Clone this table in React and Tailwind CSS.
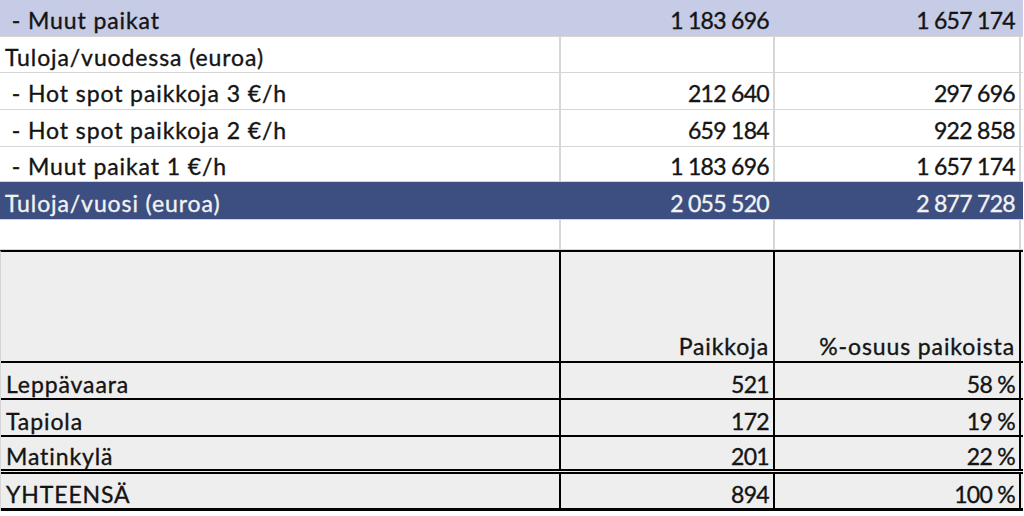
import React from "react";

const upper = [
  { label: " - Muut paikat", b: "1 183 696", c: "1 657 174", kind: "light", h: "h-[37px]" },
  { label: "Tuloja/vuodessa (euroa)", b: "", c: "", h: "h-[36px]" },
  { label: " - Hot spot paikkoja 3 €/h", b: "212 640", c: "297 696", h: "h-[37px]" },
  { label: " - Hot spot paikkoja 2 €/h", b: "659 184", c: "922 858", h: "h-[37px]" },
  { label: " - Muut paikat 1 €/h", b: "1 183 696", c: "1 657 174", h: "h-[35px]" },
  { label: "Tuloja/vuosi (euroa)", b: "2 055 520", c: "2 877 728", kind: "dark", h: "h-[38px]" },
  { label: "", b: "", c: "", h: "h-[30px]" },
];

const lower = [
  { label: "Leppävaara", b: "521", c: "58 %" },
  { label: "Tapiola", b: "172", c: "19 %" },
  { label: "Matinkylä", b: "201", c: "22 %" },
];

// labels a bit wider, digits a bit narrower (closer to the Calibri look)
const lbl = "tracking-[0.9px]";
const num = "tracking-[-0.7px]";

function UpperRow({ row }) {
  const bg =
    row.kind === "light"
      ? "bg-[#c6cbe6] text-[#141414]"
      : row.kind === "dark"
      ? "bg-[#3d4f80] text-[#f2f2f2]"
      : "bg-white text-[#141414]";
  const line = row.kind ? "border-transparent" : "border-[#d6d6d6]";
  return (
    <div className={`flex ${row.h} ${bg} border-b border-[#d6d6d6]`}>
      <div className={`w-[561px] flex items-center pt-[5px] pl-[5px] whitespace-pre border-r-2 ${line} ${lbl}`}>
        {row.label}
      </div>
      <div className={`w-[214px] flex items-center justify-end pt-[5px] pr-[4px] border-r-2 ${line} ${num}`}>
        {row.b}
      </div>
      <div className={`w-[246px] flex items-center justify-end pt-[5px] pr-[4px] border-r-2 ${line} ${num}`}>
        {row.c}
      </div>
    </div>
  );
}

function LowerRow({ label, b, c, last, double }) {
  return (
    <div
      className={`flex h-[37px] ${
        double ? "border-b-[5px] border-double" : last ? "border-b-[3px]" : "border-b-2"
      } border-black`}
    >
      <div className={`w-[560px] flex items-center pt-[7px] pl-[5px] border-r-2 border-black ${lbl}`}>{label}</div>
      <div className={`w-[214px] flex items-center justify-end pt-[7px] pr-[4px] border-r-2 border-black ${num}`}>{b}</div>
      <div className={`w-[246px] flex items-center justify-end pt-[7px] pr-[4px] border-r-2 border-black ${num}`}>{c}</div>
    </div>
  );
}

export default function App() {
  return (
    <div
      className="w-[1024px] h-[516px] overflow-hidden bg-white text-[23px] leading-none [-webkit-text-stroke:0.35px]"
      style={{ fontFamily: "Lato, 'Liberation Sans', sans-serif" }}
    >
      <div className="w-[1023px]">
        {upper.map((row, i) => (
          <UpperRow key={i} row={row} />
        ))}
      </div>

      <div className="w-[1023px] bg-[#eeeeee] text-[#141414] border-t-2 border-black border-l border-l-[#d6d6d6]">
        <div className="flex h-[111px] border-b-2 border-black">
          <div className="w-[560px] border-r-2 border-black" />
          <div className={`w-[214px] flex items-end justify-end pr-[4px] pb-[3px] border-r-2 border-black ${lbl}`}>
            Paikkoja
          </div>
          <div className={`w-[246px] flex items-end justify-end pr-[4px] pb-[3px] border-r-2 border-black ${lbl}`}>
            %-osuus paikoista
          </div>
        </div>
        {lower.map((r, i) => (
          <LowerRow key={r.label} {...r} double={i === lower.length - 1} />
        ))}
        <LowerRow label="YHTEENSÄ" b="894" c="100 %" last />
      </div>
    </div>
  );
}
